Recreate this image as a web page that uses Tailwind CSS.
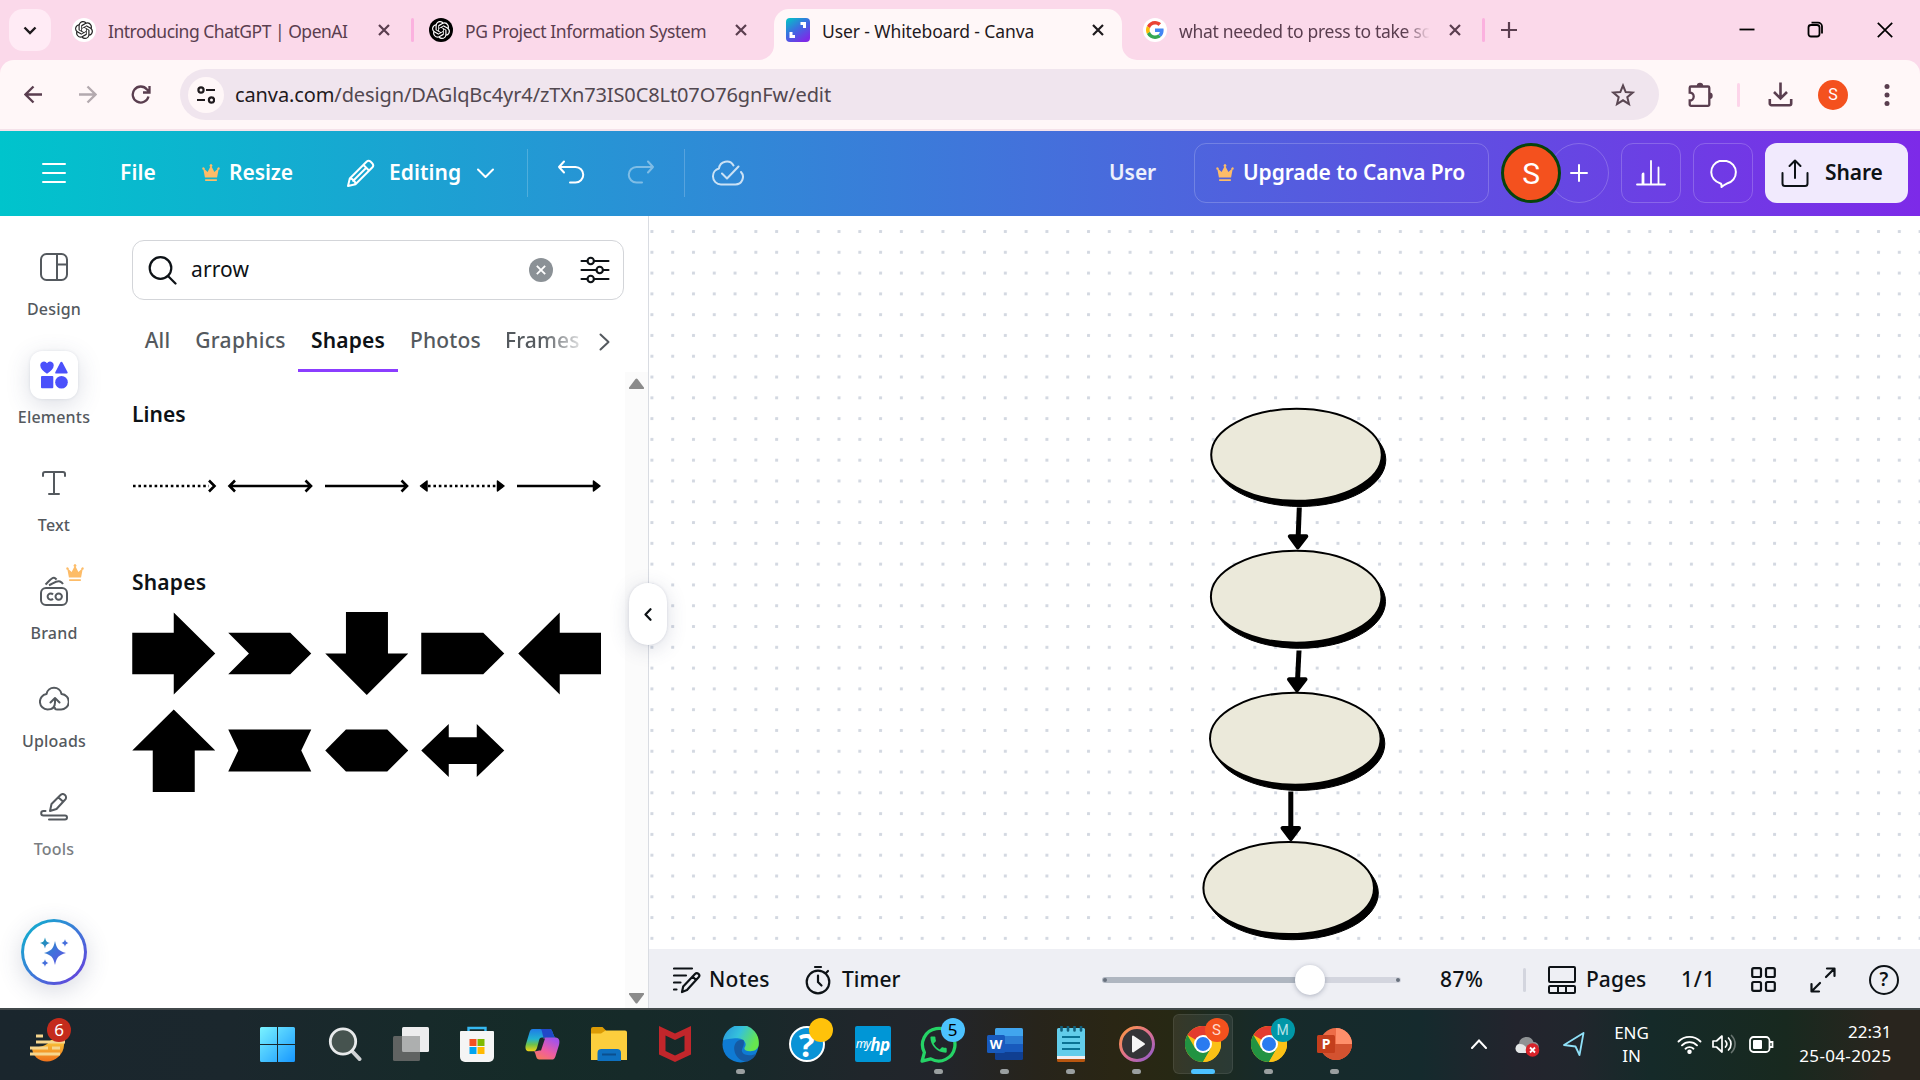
<!DOCTYPE html>
<html lang="en">
<head>
<meta charset="utf-8">
<title>User - Whiteboard - Canva</title>
<script src="https://cdn.jsdelivr.net/npm/@tailwindcss/browser@4"></script>
</head>
<body class="w-[1920px] h-[1080px] overflow-hidden bg-white font-['Noto_Sans',sans-serif] text-[#0d1216] flex flex-col">

<svg width="0" height="0" class="absolute">
  <defs>
    <symbol id="crown" viewBox="0 0 16 16"><path fill="#fdbc68" d="M2.6 12 1.3 5.2A1.1 1.1 0 1 1 2.3 4.6L5 7 7.4 2.4a1.2 1.2 0 1 1 1.2 0L11 7l2.700-2.400a1.100 1.100 0 1 1 1 .6L13.400 12zM2.800 13.600h10.400v1.500H2.800z"/></symbol>
    <symbol id="x" viewBox="0 0 12 12"><path d="M1 1l10 10M11 1 1 11" fill="none" stroke="currentColor" stroke-width="2.200"/></symbol>
    <symbol id="openai" viewBox="0 0 24 24"><path fill="currentColor" d="M22.2819 9.8211a5.9847 5.9847 0 0 0-.5157-4.9108 6.0462 6.0462 0 0 0-6.5098-2.9A6.0651 6.0651 0 0 0 4.9807 4.1818a5.9847 5.9847 0 0 0-3.9977 2.9 6.0462 6.0462 0 0 0 .7427 7.0966 5.98 5.98 0 0 0 .511 4.9107 6.051 6.051 0 0 0 6.5146 2.9001A5.9847 5.9847 0 0 0 13.2599 24a6.0557 6.0557 0 0 0 5.7718-4.2058 5.9894 5.9894 0 0 0 3.9977-2.9001 6.0557 6.0557 0 0 0-.7475-7.0729zm-9.022 12.6081a4.4755 4.4755 0 0 1-2.8764-1.0408l.1419-.0804 4.7783-2.7582a.7948.7948 0 0 0 .3927-.6813v-6.7369l2.02 1.1686a.071.071 0 0 1 .038.052v5.5826a4.504 4.504 0 0 1-4.4945 4.4944zm-9.6607-4.1254a4.4708 4.4708 0 0 1-.5346-3.0137l.142.0852 4.783 2.7582a.7712.7712 0 0 0 .7806 0l5.8428-3.3685v2.3324a.0804.0804 0 0 1-.0332.0615L9.74 19.9502a4.4992 4.4992 0 0 1-6.1408-1.6464zM2.3408 7.8956a4.485 4.485 0 0 1 2.3655-1.9728V11.6a.7664.7664 0 0 0 .3879.6765l5.8144 3.3543-2.0201 1.1685a.0757.0757 0 0 1-.071 0l-4.8303-2.7865A4.504 4.504 0 0 1 2.3408 7.872zm16.5963 3.8558L13.1038 8.364 15.1192 7.2a.0757.0757 0 0 1 .071 0l4.8303 2.7913a4.4944 4.4944 0 0 1-.6765 8.1042v-5.6772a.79.79 0 0 0-.407-.667zm2.0107-3.0231l-.142-.0852-4.7735-2.7818a.7759.7759 0 0 0-.7854 0L9.409 9.2297V6.8974a.0662.0662 0 0 1 .0284-.0615l4.8303-2.7866a4.4992 4.4992 0 0 1 6.6802 4.66zM8.3065 12.863l-2.02-1.1638a.0804.0804 0 0 1-.038-.0567V6.0742a4.4992 4.4992 0 0 1 7.3757-3.4537l-.142.0805L8.704 5.459a.7948.7948 0 0 0-.3927.6813zm1.0976-2.3654l2.602-1.4998 2.6069 1.4998v2.9994l-2.5974 1.4997-2.6067-1.4997Z"/></symbol>
    <symbol id="chrome" viewBox="0 0 36 36">
      <circle cx="18" cy="18" r="18" fill="#fbc116"/>
      <path d="M18 18 2.400 9A18 18 0 0 1 33.600 9z" fill="#e33b2e"/>
      <path d="M2.400 9A18 18 0 0 0 18 36l7.800-13.500L18 18 10.200 22.500z" fill="#229342"/>
      <path d="M18 9h15.600A18 18 0 0 1 18 36l7.800-13.500z" fill="#fbc116"/>
      <circle cx="18" cy="18" r="9" fill="#fff"/><circle cx="18" cy="18" r="7" fill="#2a7bf0"/>
    </symbol>
  </defs>
</svg>

<!-- Browser tab strip -->
<header class="h-[60px] shrink-0 bg-[#fbd9ea] flex items-start pt-[9px] pl-[9px] text-[17.5px] text-[#5a3e4f]">
  <div class="w-[42px] h-[42px] rounded-[14px] bg-[#ffebf5] flex items-center justify-center">
    <svg width="14" height="9" viewBox="0 0 14 9" fill="none" stroke="#1f1a1d" stroke-width="2.400"><path d="M1.500 1.500 7 7l5.500-5.500"/></svg>
  </div>
  <div class="ml-[21px] w-[339px] h-[42px] flex items-center">
    <div class="w-6 h-6 rounded-full bg-white flex items-center justify-center text-[#222]"><svg width="18" height="18"><use href="#openai"/></svg></div>
    <span class="ml-3 mt-[3px] w-[270px] whitespace-nowrap tracking-[-0.49px]">Introducing ChatGPT | OpenAI</span>
    <svg width="12" height="12"><use href="#x"/></svg>
  </div>
  <div class="w-[3px] h-6 mt-[9px] rounded bg-[#fbb1df]"></div>
  <div class="ml-[15px] w-[345px] h-[42px] flex items-center">
    <div class="w-6 h-6 rounded-full bg-black flex items-center justify-center text-white"><svg width="18" height="18"><use href="#openai"/></svg></div>
    <span class="ml-3 mt-[3px] w-[270px] whitespace-nowrap tracking-[-0.39px]">PG Project Information System</span>
    <svg width="12" height="12"><use href="#x"/></svg>
  </div>
  <div class="relative w-[348px] h-[51px] rounded-t-[15px] bg-[#fff7f8] text-[#1f1a1d]">
    <svg class="absolute -left-[15px] bottom-0" width="15" height="15" viewBox="0 0 15 15"><path fill="#fff7f8" d="M15 0v15H0A15 15 0 0 0 15 0z"/></svg>
    <svg class="absolute -right-[15px] bottom-0" width="15" height="15" viewBox="0 0 15 15"><path fill="#fff7f8" d="M0 0v15h15A15 15 0 0 1 0 0z"/></svg>
    <div class="h-[42px] pl-3 flex items-center">
      <svg width="24" height="24" viewBox="0 0 24 24"><defs><linearGradient id="wb" x1="0" y1="0" x2=".7" y2="1"><stop offset="0" stop-color="#00c9c4"/><stop offset=".5" stop-color="#3a6fe0"/><stop offset="1" stop-color="#7d2ae8"/></linearGradient></defs><rect width="24" height="24" rx="4" fill="url(#wb)"/><path d="M14.500 5.500H18.500V10M9 18.500H5V14" fill="none" stroke="#fff" stroke-width="3"/></svg>
      <span class="ml-3 mt-[3px] w-[270px] whitespace-nowrap tracking-[-0.1px]">User - Whiteboard - Canva</span>
      <svg width="12" height="12"><use href="#x"/></svg>
    </div>
  </div>
  <div class="ml-[21px] w-[339px] h-[42px] flex items-center">
    <div class="w-6 h-6 rounded-full bg-white flex items-center justify-center">
      <svg width="18" height="18" viewBox="0 0 48 48"><path fill="#EA4335" d="M24 9.500c3.540 0 6.710 1.220 9.210 3.600l6.850-6.850C35.900 2.380 30.470 0 24 0 14.620 0 6.510 5.380 2.560 13.220l7.980 6.190C12.430 13.720 17.740 9.500 24 9.500z"/><path fill="#4285F4" d="M46.980 24.550c0-1.570-.15-3.090-.38-4.550H24v9.020h12.940c-.58 2.960-2.260 5.480-4.780 7.180l7.730 6c4.510-4.180 7.090-10.360 7.090-17.650z"/><path fill="#FBBC05" d="M10.530 28.590c-.48-1.450-.76-2.990-.76-4.590s.27-3.140.76-4.590l-7.980-6.190C.92 16.460 0 20.120 0 24c0 3.880.92 7.540 2.560 10.780l7.970-6.190z"/><path fill="#34A853" d="M24 48c6.480 0 11.930-2.130 15.890-5.810l-7.730-6c-2.150 1.450-4.920 2.300-8.160 2.300-6.260 0-11.570-4.220-13.470-9.910l-7.980 6.190C6.510 42.620 14.620 48 24 48z"/></svg>
    </div>
    <span class="ml-3 mt-[3px] mr-[19px] w-[251px] overflow-hidden whitespace-nowrap tracking-[-0.31px] mask-r-from-90%">what needed to press to take sc</span>
    <svg width="12" height="12"><use href="#x"/></svg>
  </div>
  <div class="w-[3px] h-6 mt-[9px] rounded bg-[#fbb1df]"></div>
  <div class="ml-[16px] mt-[13px] w-[238px]"><svg width="16" height="16" viewBox="0 0 16 16" stroke="#5a3e4f" stroke-width="2.200"><path d="M8 0v16M0 8h16"/></svg></div>
  <div class="mt-[12px] flex items-center gap-[60px] text-black">
    <svg width="16" height="16" viewBox="0 0 16 16"><path d="M0.500 7.500h15" stroke="currentColor" stroke-width="1.800"/></svg>
    <svg class="-ml-[8px]" width="17" height="17" viewBox="0 0 17 17" fill="none" stroke="currentColor" stroke-width="1.800"><rect x="1.500" y="4" width="11" height="11.500" rx="2.500"/><path d="M4.500 1.600h6.500a4 4 0 0 1 4 4V12.500"/></svg>
    <svg class="-ml-[7px]" width="16" height="16" viewBox="0 0 16 16"><path d="M.8.800l14.400 14.400M15.200.800.800 15.200" stroke="currentColor" stroke-width="1.700"/></svg>
  </div>
</header>

<!-- Address bar -->
<div class="h-[71px] shrink-0 bg-[#fbd9ea]">
  <div class="h-[71px] rounded-t-[14px] bg-[#fff7f8] border-b-2 border-[#f5e2ea] flex items-center pl-6 text-[#5a3e4f]">
    <svg width="19" height="19" viewBox="0 0 19 19" fill="none" stroke="currentColor" stroke-width="2.300"><path d="M18 9.500H2M9.500 1.500l-8 8 8 8"/></svg>
    <svg class="ml-[35px] text-[#b3a9ae]" width="19" height="19" viewBox="0 0 19 19" fill="none" stroke="currentColor" stroke-width="2.300"><path d="M1 9.500h16M9.500 1.500l8 8-8 8"/></svg>
    <svg class="ml-[34px]" width="20" height="20" viewBox="0 0 20 20" fill="none" stroke="currentColor" stroke-width="2.300"><path d="M17.500 11.500A8 8 0 1 1 16 4.500l2 2M18.500 1v6.500H12"/></svg>
    <div class="ml-[29px] w-[1479px] h-[51px] rounded-full bg-[#f0e5ee] flex items-center pl-2">
      <div class="w-9 h-9 rounded-full bg-[#fff7f8] flex items-center justify-center"><svg width="18" height="18" viewBox="0 0 18 18" fill="none" stroke="#1f1a1d" stroke-width="2.200"><circle cx="4" cy="4" r="2.600"/><path d="M9 4h9M0 14h8"/><circle cx="14.500" cy="14" r="2.600"/></svg></div>
      <span class="ml-[11px] w-[1376px] text-[20px] whitespace-nowrap tracking-[-0.11px]"><span class="text-[#1f1a1d]">canva.com</span><span class="text-[#524850]">/design/DAGlqBc4yr4/zTXn73IS0C8Lt07O76gnFw/edit</span></span>
      <svg class="shrink-0" width="24" height="24" viewBox="0 0 24 24" fill="none" stroke="#5a4652" stroke-width="2"><path d="M12 2.500l2.700 6.600 7 .5-5.400 4.600 1.700 6.900-6-3.800-6 3.800 1.700-6.900L2.300 9.600l7-.5z"/></svg>
    </div>
    <svg class="ml-[28px]" width="26" height="26" viewBox="0 0 26 26"><path d="M4.500 4.500H21a1.300 1.300 0 0 1 1.300 1.300V22.500A1.300 1.300 0 0 1 21 23.800H4a1.300 1.300 0 0 1-1.300-1.300V18.500a4 4 0 0 0 0-8V5.800a1.300 1.300 0 0 1 1.300-1.300z" fill="none" stroke="currentColor" stroke-width="2.300"/><path d="M9.800 4a3.200 3.200 0 0 1 6.400 0zM22.500 10.500a3.200 3.200 0 0 1 0 6.400z" fill="currentColor"/></svg>
    <div class="ml-[24px] w-[3px] h-6 rounded bg-[#fdd5ea]"></div>
    <svg class="ml-[28px]" width="25" height="25" viewBox="0 0 25 25" fill="none" stroke="currentColor" stroke-width="2.600"><path d="M12.500.500V16M6 10l6.500 6.500L19 10M1.800 17v4.500a1.700 1.700 0 0 0 1.700 1.700h18a1.700 1.700 0 0 0 1.700-1.700V17"/></svg>
    <div class="ml-[25px] w-[30px] h-[30px] rounded-full bg-[#f4511e] text-white font-['Roboto'] text-[16px] flex items-center justify-center">S</div>
    <svg class="ml-[36px]" width="6" height="22" viewBox="0 0 6 22" fill="currentColor"><circle cx="3" cy="2.500" r="2.500"/><circle cx="3" cy="11" r="2.500"/><circle cx="3" cy="19.500" r="2.500"/></svg>
  </div>
</div>

<!-- Editor menu bar -->
<nav class="h-[85px] pb-px shrink-0 bg-[linear-gradient(90deg,#00c4cc,#7d2ae8)] flex items-center text-white text-[21px] font-semibold whitespace-nowrap tracking-[-0.08px]">
  <svg class="ml-[42px]" width="24" height="26" viewBox="0 0 24 26" stroke="#fff" stroke-width="2" stroke-linecap="round"><path d="M1 4h22M1 13h22M1 22h22"/></svg>
  <span class="ml-[54px] w-[82px] tracking-[0.1px]">File</span>
  <svg width="18" height="18"><use href="#crown"/></svg>
  <span class="ml-[9px] w-[117px]">Resize</span>
  <svg width="29" height="29" viewBox="0 0 29 29" fill="none" stroke="#fff" stroke-width="2" stroke-linejoin="round"><path d="M2 27l1.800-7.500L20.500 2.800a3 3 0 0 1 4.200 0l1.500 1.500a3 3 0 0 1 0 4.200L9.500 25.200zM17.500 6l5.700 5.700M3.800 19.500c3 .2 5.500 2.700 5.700 5.700M6.500 22.500 20 9"/></svg>
  <span class="ml-[14px] w-[88px] tracking-[0.05px]">Editing</span>
  <svg width="17" height="11" viewBox="0 0 17 11" fill="none" stroke="#fff" stroke-width="2" stroke-linecap="round" stroke-linejoin="round"><path d="M1 1.500l7.500 7.500L16 1.500"/></svg>
  <div class="ml-[33px] w-px h-12 bg-white/20"></div>
  <svg class="ml-[29px]" width="28" height="26" viewBox="0 0 28 26" fill="none" stroke="#fff" stroke-width="2" stroke-linecap="round" stroke-linejoin="round"><path d="M7 1.500 2 7l5 5.500M2 7h16.500a7.500 7.500 0 0 1 0 15.500H13"/></svg>
  <svg class="ml-[42px] opacity-40" width="28" height="26" viewBox="0 0 28 26" fill="none" stroke="#fff" stroke-width="2" stroke-linecap="round" stroke-linejoin="round"><path d="M21 1.500 26 7l-5 5.500M26 7H9.500a7.500 7.500 0 0 0 0 15.500H15"/></svg>
  <div class="ml-[29px] w-px h-12 bg-white/20"></div>
  <svg class="ml-[26px] opacity-75" width="34" height="28" viewBox="0 0 34 28" fill="none" stroke="#fff" stroke-width="2" stroke-linecap="round" stroke-linejoin="round"><path d="M22.500 6.500A7.800 7.800 0 0 0 8 9.500a8 8 0 0 0-6 8 8 8 0 0 0 8 8h14.500a7.500 7.500 0 0 0 5.500-12.500M11 14.500l5 5L27.500 7.500"/></svg>
  <span class="ml-[364px] w-[85px] text-white/90">User</span>
  <div class="w-[295px] h-[60px] rounded-xl border border-white/20 flex items-center pl-[21px]">
    <svg width="18" height="18"><use href="#crown"/></svg><span class="ml-[9px]">Upgrade to Canva Pro</span>
  </div>
  <div class="ml-[12px] w-[60px] h-[60px] shrink-0 z-10 rounded-full bg-[#f4511e] border-[3px] border-[#07430c] flex items-center justify-center font-['Roboto'] text-[30px] font-normal">S</div>
  <div class="-ml-[12px] w-[60px] h-[60px] shrink-0 rounded-full border border-white/20 flex items-center justify-center"><svg width="18" height="18" viewBox="0 0 18 18" stroke="#fff" stroke-width="2" stroke-linecap="round"><path d="M9 1v16M1 9h16"/></svg></div>
  <div class="ml-[12px] w-[60px] h-[60px] shrink-0 rounded-xl border border-white/20 flex items-center justify-center"><svg width="30" height="28" viewBox="0 0 30 28" fill="none" stroke="#fff" stroke-width="1.800" stroke-linecap="round"><path d="M1 25.500h28M6.500 25V15.500a1 1 0 0 1 1-1M7.500 25V15M15 25V2M22.500 25V8.500"/></svg></div>
  <div class="ml-[12px] w-[60px] h-[60px] shrink-0 rounded-xl border border-white/20 flex items-center justify-center"><svg width="32" height="32" viewBox="0 0 32 32" fill="none" stroke="#fff" stroke-width="2" stroke-linejoin="round"><path d="M13 26.200A11.500 11.500 0 0 1 12.500 4h7a11.500 11.500 0 0 1 .5 22.500c-1.500.7-3.300 1.500-5.500 3.500.3-2-.2-3.500-1.500-3.800z"/></svg></div>
  <div class="ml-[12px] w-[143px] h-[60px] shrink-0 rounded-xl bg-[#f1eafd] text-[#0d1216] flex items-center pl-4"><svg width="28" height="30" viewBox="0 0 28 30" fill="none" stroke="currentColor" stroke-width="2" stroke-linecap="round" stroke-linejoin="round"><path d="M14 20V2.500M8.500 8 14 2.500 19.500 8M1.500 15v10.500a2.500 2.500 0 0 0 2.500 2.500h20a2.500 2.500 0 0 0 2.500-2.500V15"/></svg><span class="ml-4">Share</span></div>
</nav>

<main class="h-[792px] shrink-0 flex">
  <!-- Side rail -->
  <aside class="w-[108px] flex flex-col items-center text-[16px] font-medium tracking-[0.2px] text-[#54595e]">
    <div class="h-[108px] mt-[18px] flex flex-col items-center pt-[9px]">
      <div class="w-12 h-12 flex items-center justify-center"><svg width="28" height="28" viewBox="0 0 28 28" fill="none" stroke="currentColor" stroke-width="2"><rect x="1" y="1" width="26" height="26" rx="5.500"/><path d="M17 1v26M17 11.500h10"/></svg></div><span class="mt-[6px]">Design</span></div>
    <div class="h-[108px] flex flex-col items-center pt-[9px]">
      <div class="w-12 h-12 rounded-xl bg-white shadow-[0_6px_24px_rgba(60,70,110,0.18),0_0_3px_rgba(60,70,110,0.12)] flex items-center justify-center"><svg width="28" height="28" viewBox="0 0 28 28" fill="#4b50fb"><path d="M7 12.800C3 10 .3 7.500.3 4.500A3.600 3.600 0 0 1 7 2.300a3.600 3.600 0 0 1 6.700 2.200c0 3-2.700 5.500-6.700 8.300zM20.300 1.500c.5-1 1.700-1 2.200 0l5 9.500c.4.800 0 1.600-1 1.600H16.400c-1 0-1.500-.8-1-1.600z"/><rect x="1" y="15" width="12.300" height="12.300" rx="1"/><circle cx="21.500" cy="21.200" r="6.300"/></svg></div><span class="mt-[6px]">Elements</span></div>
    <div class="h-[108px] flex flex-col items-center pt-[9px]">
      <div class="w-12 h-12 flex items-center justify-center"><svg width="26" height="26" viewBox="0 0 26 26" fill="none" stroke="currentColor" stroke-width="2" stroke-linecap="round"><path d="M2 6V4a2 2 0 0 1 2-2h18a2 2 0 0 1 2 2v2M13 2v22M8 24h10"/></svg></div><span class="mt-[6px]">Text</span></div>
    <div class="h-[108px] flex flex-col items-center pt-[9px]">
      <div class="relative w-12 h-12 flex items-center justify-center"><svg width="30" height="32" viewBox="0 0 30 32" fill="none" stroke="currentColor" stroke-width="2"><rect x="2" y="13" width="26" height="17" rx="5"/><path d="M6.500 9.500C11 5 13 2.500 15 2.800c1.500.2 2 1 2.500 1.800M10 10.200c4-1.500 7.500-5 11-3.700 2 .8 2.500 1.700 3 2.500"/><path d="M14 19.500a3.100 3.100 0 1 0 0 4.200" /><circle cx="19.700" cy="21.600" r="3.200"/></svg>
        <svg class="absolute left-[36px] -top-[3px]" width="18" height="18"><use href="#crown"/></svg></div><span class="mt-[6px]">Brand</span></div>
    <div class="h-[108px] flex flex-col items-center pt-[9px]">
      <div class="w-12 h-12 flex items-center justify-center"><svg class="-mt-[3px]" width="30" height="28" viewBox="0 0 30 28" fill="none" stroke="currentColor" stroke-width="2" stroke-linecap="round" stroke-linejoin="round"><path d="M16 24c0 1 1 1.500 2 1.500h3.500A7.700 7.700 0 0 0 22.500 10 7.600 7.600 0 0 0 7.500 10 7.800 7.800 0 0 0 8.500 25.500c4 0 7.500-2 7.500-7V14M11.500 18.500 16 14l4.500 4.500"/></svg></div><span class="mt-[6px]">Uploads</span></div>
    <div class="h-[108px] flex flex-col items-center pt-[9px]">
      <div class="w-12 h-12 flex items-center justify-center"><svg width="28" height="28" viewBox="0 0 28 28" fill="none" stroke="currentColor" stroke-width="2" stroke-linecap="round" stroke-linejoin="round"><path d="M10 18l1.500-7L20.500 2a3 3 0 0 1 4.500 0 3.200 3.200 0 0 1 0 4.800L16.500 16zM18.500 4.500l4.500 4M5.500 18H3.500a2.300 2.300 0 0 0 0 4.600H25a2 2 0 0 1 0 4H9"/></svg></div><span class="mt-[6px] text-[#7a7e82]">Tools</span></div>
    <div class="mt-[37px] w-[66px] h-[66px] rounded-full p-[3px] bg-[linear-gradient(135deg,#08b8cc,#3d7bd8_50%,#6c35dd)] shadow-[0_6px_24px_rgba(60,70,110,0.2)]">
      <div class="w-full h-full rounded-full bg-white flex items-center justify-center"><svg width="32" height="32" viewBox="0 0 32 32"><defs><linearGradient id="ai" x1="0" y1="0" x2="1" y2="1"><stop offset="0" stop-color="#149cb0"/><stop offset=".5" stop-color="#4270dc"/><stop offset="1" stop-color="#6a4be0"/></linearGradient></defs><path fill="url(#ai)" d="M17 5c1.800 8 3.500 9.800 11 12-7.500 2.200-9.200 4-11 12-1.800-8-3.500-9.800-11-12 7.500-2.200 9.200-4 11-12zM7 1.500C8 5.500 8.600 6 12.300 7 8.600 8 8 8.500 7 12.500 6 8.500 5.400 8 1.700 7 5.400 6 6 5.500 7 1.500zM27 3c.6 2.600 1 3 3.600 4-2.600 1-3 1.400-3.600 4-.6-2.600-1-3-3.600-4 2.600-1 3-1.400 3.600-4zM7 23c.6 2.600 1 3 3.600 4-2.600 1-3 1.400-3.600 4-.6-2.600-1-3-3.600-4 2.600-1 3-1.400 3.600-4z"/></svg></div>
    </div>
  </aside>

  <!-- Elements panel -->
  <section class="relative w-[541px] border-r border-[#d9dce2] flex flex-col">
    <div class="ml-6 mt-6 w-[492px] h-[60px] rounded-xl border border-[#d3d5d9] flex items-center pl-[15px] shrink-0">
      <svg width="30" height="30" viewBox="0 0 30 30" fill="none" stroke="currentColor" stroke-width="2.200" stroke-linecap="round"><circle cx="12.500" cy="13" r="10.800"/><path d="M20 21l7.500 7.500"/></svg>
      <span class="ml-[13px] w-[338px] text-[21px] tracking-[0.1px]">arrow</span>
      <div class="w-6 h-6 rounded-full bg-[#8b9196] flex items-center justify-center text-white"><svg width="10" height="10"><use href="#x"/></svg></div>
      <svg class="ml-[27px]" width="30" height="30" viewBox="0 0 30 30" fill="none" stroke="currentColor" stroke-width="2.100" stroke-linecap="round"><path d="M1.500 6h6M14 6h14.500M1.500 15h15M23 15h5.500M1.500 24h6M14 24h14.500"/><circle cx="10.700" cy="6" r="3.200"/><circle cx="19.700" cy="15" r="3.200"/><circle cx="10.700" cy="24" r="3.200"/></svg>
    </div>
    <div class="h-[72px] pl-[24px] flex text-[21px] font-medium text-[#54595e] shrink-0 whitespace-nowrap tracking-[0.15px]">
      <div class="w-[51px] flex items-center justify-center pt-[10px]">All</div>
      <div class="w-[115px] flex items-center justify-center pt-[10px] tracking-[0.3px]">Graphics</div>
      <div class="w-[100px] flex items-center justify-center border-b-3 border-[#8b3dff] text-[#0d1216] font-semibold pt-[13px]">Shapes</div>
      <div class="w-[95px] flex items-center justify-center pt-[10px]">Photos</div>
      <div class="w-[96px] flex items-center pl-3 pt-[10px] mask-r-from-50%">Frames</div>
      <div class="w-8 flex items-center justify-center pt-[12px]"><svg class="mr-px" width="11" height="18" viewBox="0 0 11 18" fill="none" stroke="currentColor" stroke-width="2" stroke-linecap="round" stroke-linejoin="round"><path d="M1.500 1.500 9.500 9l-8 7.500"/></svg></div>
    </div>
    <div class="flex-1 flex">
      <div class="w-[517px] pl-6">
        <h2 class="mt-[28px] h-[28px] leading-[28px] text-[21px] font-semibold tracking-[0.05px]">Lines</h2>
        <svg class="mt-[44px]" width="470" height="28" viewBox="132 472 470 28" fill="none" stroke="#000" stroke-width="2.600">
          <path stroke-dasharray="2.600 2.800" d="M133 486h76"/><path d="M209 480.500l5.500 5.500-5.500 5.500"/>
          <path d="M230 486h80M235 480.500l-5.500 5.500 5.500 5.500M305.500 480.500l5.500 5.500-5.500 5.500"/>
          <path d="M325 486h81M401.500 480.500l5.500 5.500-5.500 5.500"/>
          <path stroke-dasharray="2.600 2.800" d="M428 486h70"/><path fill="#000" stroke-width="1.500" stroke-linejoin="round" d="M427 481v10l-6.500-5zM497.500 481v10l6.500-5z"/>
          <path d="M517 486h78"/><path fill="#000" stroke-width="1.500" stroke-linejoin="round" d="M593.500 481v10l6.500-5z"/>
        </svg>
        <h2 class="mt-[68px] h-[28px] leading-[28px] text-[21px] font-semibold tracking-[0.2px]">Shapes</h2>
        <div class="mt-[16px] w-[469px] grid grid-cols-5 gap-x-[13px] gap-y-[14px]">
          <svg width="83.500" height="83" viewBox="0 0 83 83"><path d="M0 20.700h41.500V.500L83 41.500l-41.500 41V62.200H0z"/></svg>
          <svg width="83.500" height="83" viewBox="0 0 83 83"><path d="M0 20.700h62L83 41.500 62 62.200H0l20.700-20.700z"/></svg>
          <svg width="83.500" height="83" viewBox="0 0 83 83"><path d="M20.700 0h42v41.500H83L41.500 83 0 41.500h20.700z"/></svg>
          <svg width="83.500" height="83" viewBox="0 0 83 83"><path d="M0 20.700h62L83 41.500 62 62.200H0z"/></svg>
          <svg width="83.500" height="83" viewBox="0 0 83 83"><path d="M83 20.700H41.500V.500L0 41.500l41.500 41V62.200H83z"/></svg>
          <svg width="83.500" height="83" viewBox="0 0 83 83"><path d="M41.500.500 83 41.500H62.500V83h-42V41.500H0z"/></svg>
          <svg width="83.500" height="83" viewBox="0 0 83 83"><path d="M0 20.500h83l-10 21 10 21H0l10-21z"/></svg>
          <svg width="83.500" height="83" viewBox="0 0 83 83"><path d="M20.700 20.500H62l21 21-21 21H20.700L0 41.500z"/></svg>
          <svg width="83.500" height="83" viewBox="0 0 83 83"><path d="M27.500 15v13.300H55.500V15L83 41.500 55.500 68V55H27.500V68L0 41.500z"/></svg>
        </div>
      </div>
      <div class="flex-1 bg-[#fbfbfb] flex flex-col items-center justify-between pt-[6px] pb-[4px]">
        <svg width="15" height="11" viewBox="0 0 15 11"><path fill="#8b8b8b" d="M6.500 1a1.300 1.300 0 0 1 2 0L14.500 9a1 1 0 0 1-1 2h-12a1 1 0 0 1-1-2z"/></svg>
        <svg width="15" height="11" viewBox="0 0 15 11"><path fill="#8b8b8b" d="M6.500 10a1.300 1.300 0 0 0 2 0L14.500 2a1 1 0 0 0-1-2h-12a1 1 0 0 0-1 2z"/></svg>
      </div>
    </div>
    <div class="absolute z-10 left-[521px] top-[367px] w-[38px] h-[62px] rounded-full bg-white shadow-[0_4px_20px_rgba(60,70,110,0.18),0_0_3px_rgba(60,70,110,0.15)] flex items-center justify-center"><svg width="8" height="13" viewBox="0 0 8 13" fill="none" stroke="#0d1216" stroke-width="2.200" stroke-linecap="round" stroke-linejoin="round"><path d="M6.500 1.200 1.500 6.500l5 5.300"/></svg></div>
  </section>

  <!-- Whiteboard -->
  <section class="w-[1271px] flex flex-col">
    <svg width="1271" height="733" viewBox="649 216 1271 733">
      <defs><pattern id="dots" patternUnits="userSpaceOnUse" x="650.400" y="230" width="20.790" height="20.790"><rect width="3" height="3" rx=".6" fill="#d3d8e1"/></pattern></defs>
      <rect x="649" y="216" width="1271" height="733" fill="url(#dots)"/>
      <g stroke="#000">
        <ellipse cx="1300" cy="459.800" rx="85.800" ry="46.700"/><ellipse cx="1296.500" cy="454.800" rx="85.300" ry="46" fill="#ebe9da" stroke-width="2"/>
        <ellipse cx="1299.700" cy="601.600" rx="85.800" ry="46.700"/><ellipse cx="1296.200" cy="596.700" rx="85.300" ry="46" fill="#ebe9da" stroke-width="2"/>
        <ellipse cx="1299" cy="743.700" rx="85.800" ry="46.700"/><ellipse cx="1295.300" cy="738.700" rx="85.300" ry="46" fill="#ebe9da" stroke-width="2"/>
        <ellipse cx="1292.500" cy="893" rx="85.800" ry="46.700"/><ellipse cx="1288.700" cy="888" rx="85.300" ry="46" fill="#ebe9da" stroke-width="2"/>
      </g>
      <g stroke="#000" stroke-width="5" stroke-linejoin="round">
        <path d="M1299.300 507.500 1298.200 536"/><path stroke-width="4" d="M1289.800 536.300h16.500l-8.500 11z"/>
        <path d="M1299 650.500 1297.600 679"/><path stroke-width="4" d="M1289 679.300h16.500l-8.500 11z"/>
        <path d="M1290.800 791.500V828"/><path stroke-width="4" d="M1282.500 828h16.500l-8.200 11z"/>
      </g>
    </svg>
    <footer class="h-[59px] bg-[#eeeff4] flex items-center pb-px pt-[3px] text-[21px] font-medium whitespace-nowrap tracking-[0.05px]">
      <svg class="ml-6" width="28" height="28" viewBox="0 0 28 28" fill="none" stroke="currentColor" stroke-width="2.200" stroke-linecap="round" stroke-linejoin="round"><path d="M1 2.500h18M1 9.500h12M1 16.500h6.500M1 23.500h2.500M9 26l1.200-5.500L22 8a2.400 2.400 0 0 1 3.600 3.300L14 24zM19.500 10.500l3.500 3.500"/></svg>
      <span class="ml-[8px] w-[96px] tracking-[0.25px]">Notes</span>
      <svg width="26" height="30" viewBox="0 0 26 30" fill="none" stroke="currentColor" stroke-width="2.200" stroke-linecap="round"><circle cx="13" cy="17" r="11.300"/><path d="M10 2h6M13 10.500V17l3.500 3.500M21 8l2-2"/></svg>
      <span class="ml-[11px] w-[260px]">Timer</span>
      <div class="relative w-[299px] h-[30px] flex items-center">
        <div class="w-[209px] h-[6px] rounded-l-full bg-[#afb6c0] flex items-center pl-px"><div class="w-1 h-1 rounded-full bg-[#67707c]"></div></div>
        <div class="w-[90px] h-[6px] rounded-r-full bg-[#d3d5de] flex items-center justify-end pr-px"><div class="w-1 h-1 rounded-full bg-[#67707c]"></div></div>
        <div class="absolute left-[193px] top-0 w-[30px] h-[30px] rounded-full bg-white shadow-[0_1px_5px_rgba(50,60,90,0.35)]"></div>
      </div>
      <span class="ml-[39px] w-[83px] tracking-[0.5px]">87%</span>
      <div class="w-[3px] h-6 rounded bg-[#d3d5de]"></div>
      <svg class="ml-[22px]" width="28" height="28" viewBox="0 0 28 28" fill="none" stroke="currentColor" stroke-width="2"><rect x="1" y="1" width="26" height="15" rx="1"/><rect x="1" y="20" width="26" height="7" rx="1"/><path d="M10 20v7M18 20v7"/></svg>
      <span class="ml-[10px] w-[95px]">Pages</span><span class="w-[70px] tracking-[0.8px]">1/1</span>
      <svg width="25" height="25" viewBox="0 0 25 25" fill="none" stroke="currentColor" stroke-width="2.200"><rect x="1.200" y="1.200" width="8.800" height="8.800" rx="1.500"/><rect x="15" y="1.200" width="8.800" height="8.800" rx="1.500"/><rect x="1.200" y="15" width="8.800" height="8.800" rx="1.500"/><rect x="15" y="15" width="8.800" height="8.800" rx="1.500"/></svg>
      <svg class="ml-[34px]" width="26" height="26" viewBox="0 0 26 26" fill="none" stroke="currentColor" stroke-width="2.200" stroke-linecap="round" stroke-linejoin="round"><path d="M17 1.500h7.500V9M24 2l-8 8M9 24.500H1.500V17M2 24l8-8"/></svg>
      <div class="ml-[33px] w-[30px] h-[30px] rounded-full border-2 border-[#0d1216] flex items-center justify-center text-[19px] font-semibold">?</div>
    </footer>
  </section>
</main>

<!-- Taskbar -->
<div class="h-[72px] pb-[2px] shrink-0 border-t-2 border-[#42494b] bg-[linear-gradient(90deg,#1a262d_0%,#1b272d_12%,#172a2a_22%,#152b28_28%,#17292a_38%,#20262b_45%,#22252b_49%,#27241b_54%,#2a2614_58%,#272814_61%,#1c2a20_63%,#172a2a_66%,#152a2d_74%,#23242d_79%,#21262d_82%,#152a29_86%,#18291f_93%,#29251e_98%)] flex items-center text-white">
  <div class="relative ml-[29px] w-[38px] h-[38px]"><svg width="38" height="38" viewBox="0 0 38 38"><defs><linearGradient id="sun" x1="0" y1="0" x2="0" y2="1"><stop offset="0" stop-color="#f8c93a"/><stop offset="1" stop-color="#f0721a"/></linearGradient></defs><path d="M3 22c0 9 7 14.500 15 14.500S35 29 35 20l1-5H22c-4 6-12 8-19 7z" fill="url(#sun)"/><path d="M7 11h7M7 17h29M1 23h18M23 23h8M1 29h30" stroke="#f6d68e" stroke-width="2.800"/></svg>
    <div class="absolute left-[18px] -top-[7px] w-6 h-6 rounded-full bg-[#c42b1c] text-[17px] flex items-center justify-center">6</div></div>
  <div class="ml-[177px] flex">
    <div class="w-[67.500px] h-[66px] flex items-center pl-[15.500px]"><svg width="35" height="35" viewBox="0 0 35 35"><defs><linearGradient id="win" x1="0" y1="0" x2="1" y2="1"><stop offset="0" stop-color="#7af3ff"/><stop offset="1" stop-color="#1797ff"/></linearGradient></defs><path fill="url(#win)" d="M1.500 0H17v17H0V1.500A1.500 1.500 0 0 1 1.500 0zM18 0h15.500A1.500 1.500 0 0 1 35 1.500V17H18zM0 18h17v17H1.500A1.500 1.500 0 0 1 0 33.500zM18 18h17v15.500a1.500 1.500 0 0 1-1.500 1.500H18z"/></svg></div>
    <div class="w-[66px] h-[66px] flex items-center justify-center"><svg width="34" height="34" viewBox="0 0 34 34"><path d="M23 23l8.500 9" stroke="#cfd2d4" stroke-width="4" stroke-linecap="round"/><circle cx="15" cy="14.500" r="12.700" fill="#46534f" stroke="#e8eaeb" stroke-width="2.800"/></svg></div>
    <div class="w-[66px] h-[66px] flex items-center justify-center"><svg width="36" height="34" viewBox="0 0 36 34"><rect x="9" y="0" width="27" height="25" rx="1.500" fill="#ededee"/><rect x="0" y="9" width="27" height="25" rx="1.500" fill="#606362"/><path d="M9 9h18v16H10.500A1.500 1.500 0 0 1 9 23.500z" fill="#adafaf"/></svg></div>
    <div class="w-[66px] h-[66px] flex items-center justify-center"><svg width="36" height="36" viewBox="0 0 36 36"><path d="M9.500 7V2h17v5" fill="none" stroke="#35b9f1" stroke-width="2.400"/><path d="M2 5h32a1 1 0 0 1 1 1v25a5 5 0 0 1-5 5H6a5 5 0 0 1-5-5V6a1 1 0 0 1 1-1z" fill="#f5f5f5"/><path fill="#f25022" d="M10.500 13H17.500V20h-7z"/><path fill="#7fba00" d="M18.500 13H25.500V20h-7z"/><path fill="#00a4ef" d="M10.500 21H17.500V28h-7z"/><path fill="#ffb900" d="M18.500 21H25.500V28h-7z"/></svg></div>
    <div class="w-[66px] h-[66px] flex items-center justify-center"><svg width="35" height="32" viewBox="0 0 35 32"><defs><linearGradient id="cp1" x1="0" y1="0" x2="0" y2="1"><stop offset="0" stop-color="#1f7be8"/><stop offset=".45" stop-color="#22b3d0"/><stop offset=".7" stop-color="#6fc24a"/><stop offset="1" stop-color="#f3d313"/></linearGradient><linearGradient id="cp2" x1=".6" y1="0" x2="0" y2="1"><stop offset="0" stop-color="#a653e8"/><stop offset=".5" stop-color="#ee5da0"/><stop offset="1" stop-color="#f9804c"/></linearGradient></defs><path d="M8 1h17c3 0 3 8.500 6 8.500h-9l-5 0c-2 0-2.500 1-3 3L12 20c-.7 2-1.500 3.300-4 3.300H4.500C0 23.300 0 19.500 1 16L4 6c1-3.500 1.500-5 4-5z" fill="url(#cp1)"/><path d="M15 1h10c3 0 3 8.500 6 8.500h-9.500c-2.500 0-3 1-3.500-1.500C17 4 17 1 15 1z" fill="#2148c8"/><path d="M27 31.500H14c-4 0-2.500-8.200-6-8.200 3.500 0 6 .2 7-3.300l2-7.200c.8-2.500 2-3.300 4-3.300h9.500c4 0 4.500 4 3.500 7.500L31 26.500c-1 3.500-1.500 5-4 5z" fill="url(#cp2)"/><path d="M17 10.500h3l-4 12h-4z" fill="#182a28"/></svg></div>
    <div class="w-[66px] h-[66px] flex items-center justify-center"><svg width="36" height="34" viewBox="0 0 36 34"><path d="M0 2a2 2 0 0 1 2-2h9.500L15 3.500 12 8H0z" fill="#dc9b05"/><path d="M0 6.500h10L14.500 3.500H34a2 2 0 0 1 2 2V33H0z" fill="#fcce3d"/><path d="M6.500 34V26a4 4 0 0 1 4-4H26a4 4 0 0 1 4 4v8z" fill="#0e70c0"/><path d="M11 27.500h14" stroke="#0b4f8e" stroke-width="2"/></svg></div>
    <div class="w-[66px] h-[66px] flex items-center justify-center"><svg width="32" height="36" viewBox="0 0 32 36"><path d="M0 0l16 7.500L32 0v28.500L16 36 0 28.500zM6.500 9.500v15.500L16 29.500 25.500 25V9.500L16 14z" fill="#c2262b"/></svg></div>
    <div class="relative w-[66px] h-[66px] flex items-center justify-center"><svg width="37" height="37" viewBox="0 0 36 36"><defs><linearGradient id="ed" x1="0" y1="0" x2="1" y2=".4"><stop offset="0" stop-color="#2793dc"/><stop offset=".5" stop-color="#35c1dc"/><stop offset="1" stop-color="#66e64e"/></linearGradient></defs><circle cx="18" cy="18" r="17.500" fill="#0f7bd4"/><path d="M1 14A17.500 17.500 0 0 1 35.800 17.500c0 4.500-3.500 7-8.300 7-4.500 0-6.500-1.800-5.500-3.500 3-4-1-9-7-9-6.500 0-12 1-14 2z" fill="url(#ed)"/><path d="M21 13.500c-6-1-10 4-9 10 1 7.500 8 11.500 13 11 4-1.500 7-4.500 8.500-7.500-4 2-12 2.500-14-2-1-3.500 3-5 1.500-11.500z" fill="#155aa3"/></svg><i class="absolute bottom-[3px] w-[9px] h-[5px] rounded-full bg-[#9a9fa0]"></i></div>
    <div class="relative w-[66px] h-[66px] flex items-center justify-center"><div class="w-9 h-9 rounded-full bg-[#0a93d6] border-2 border-white flex items-center justify-center text-[33px] font-bold leading-none">?</div><i class="absolute left-[35px] top-[7px] w-6 h-6 rounded-full bg-[#ffc20a]"></i></div>
    <div class="w-[66px] h-[66px] flex items-center justify-center"><div class="w-9 h-9 rounded-[2px] bg-[#0096d6] flex items-center justify-center italic text-[12px] leading-none tracking-[-0.7px]">my<span class="text-[17px] font-bold">hp</span></div></div>
    <div class="relative w-[66px] h-[66px] flex items-center justify-center"><svg width="37" height="37" viewBox="0 0 36 36"><path d="M2 34.200l2.300-8.500A15.800 15.800 0 1 1 10.500 32z" fill="none" stroke="#25d366" stroke-width="3.200" stroke-linejoin="round"/><path transform="translate(7.500 7.500) scale(.88)" fill="#25d366" d="M6.620 10.790c1.440 2.830 3.760 5.140 6.590 6.590l2.200-2.200c.27-.27.67-.36 1.020-.24 1.120.37 2.330.57 3.570.57.55 0 1 .45 1 1V20c0 .55-.45 1-1 1-9.390 0-17-7.610-17-17 0-.55.45-1 1-1h3.500c.55 0 1 .45 1 1 0 1.250.2 2.450.57 3.570.11.35.03.74-.25 1.020l-2.200 2.200z"/></svg><b class="absolute left-[35px] top-[7px] w-6 h-6 rounded-full bg-[#4cc2ff] text-black font-normal text-[17px] flex items-center justify-center">5</b><i class="absolute bottom-[3px] w-[9px] h-[5px] rounded-full bg-[#9a9fa0]"></i></div>
    <div class="relative w-[66px] h-[66px] flex items-center justify-center"><svg width="36" height="32" viewBox="0 0 36 32"><path fill="#41a5ee" d="M8 1.500A1.500 1.500 0 0 1 9.500 0h25A1.500 1.500 0 0 1 36 1.500V8H8z"/><path fill="#2b7cd3" d="M8 8h28v8H8z"/><path fill="#185abd" d="M8 16h28v8H8z"/><path fill="#103f91" d="M8 24h28v6.500a1.500 1.500 0 0 1-1.500 1.500h-25A1.500 1.500 0 0 1 8 30.500z"/><rect y="7" width="18" height="18" rx="1.500" fill="#185abd"/><text x="9" y="20.500" text-anchor="middle" font-size="13" font-weight="700" fill="#fff">W</text></svg><i class="absolute bottom-[3px] w-[9px] h-[5px] rounded-full bg-[#9a9fa0]"></i></div>
    <div class="relative w-[66px] h-[66px] flex items-center justify-center"><svg width="28" height="36" viewBox="0 0 28 36"><path d="M0 3.500A1.500 1.500 0 0 1 1.500 2h25A1.500 1.500 0 0 1 28 3.500V30H0z" fill="#62cdea"/><path d="M0 30h28v3H0z" fill="#f1eef0"/><path d="M0 33h28v1.500a1.500 1.500 0 0 1-1.500 1.500h-25A1.500 1.500 0 0 1 0 34.500z" fill="#b8560f"/><path d="M4.500 0v4.500M11 0v4.500M17.500 0v4.500M24 0v4.500" stroke="#12607c" stroke-width="2.600" stroke-linecap="round"/><path d="M5 11h18M5 17h18M5 23h18" stroke="#0a7294" stroke-width="2"/></svg><i class="absolute bottom-[3px] w-[9px] h-[5px] rounded-full bg-[#9a9fa0]"></i></div>
    <div class="relative w-[66px] h-[66px] flex items-center justify-center"><svg width="36" height="36" viewBox="0 0 36 36"><defs><linearGradient id="mp" x1="0" y1="0" x2="1" y2="1"><stop offset="0" stop-color="#ff9a3d"/><stop offset=".5" stop-color="#e0708f"/><stop offset="1" stop-color="#8a5ad0"/></linearGradient></defs><circle cx="18" cy="18" r="16.500" fill="#343437" stroke="url(#mp)" stroke-width="3"/><path d="M14 10.500 25 18l-11 7.500z" fill="#f5f5f5" stroke="#f5f5f5" stroke-width="2" stroke-linejoin="round"/></svg><i class="absolute bottom-[3px] w-[9px] h-[5px] rounded-full bg-[#9a9fa0]"></i></div>
    <div class="relative w-[66px] h-[66px] flex items-center justify-center"><div class="w-[60px] h-[60px] rounded-md bg-white/8 border border-white/8 flex items-center justify-center"><svg width="36" height="36"><use href="#chrome"/></svg></div><b class="absolute left-[35px] top-[7px] w-6 h-6 rounded-full bg-[#f4511e] text-[#ffd9cc] font-['Roboto'] font-normal text-[15px] flex items-center justify-center">S</b><i class="absolute bottom-[3px] w-6 h-[5px] rounded-full bg-[#4cc2ff]"></i></div>
    <div class="relative w-[66px] h-[66px] flex items-center justify-center"><svg width="36" height="36"><use href="#chrome"/></svg><b class="absolute left-[35px] top-[7px] w-6 h-6 rounded-full bg-[#0097a7] text-[#b5e3e8] font-['Roboto'] font-normal text-[14px] flex items-center justify-center">M</b><i class="absolute bottom-[3px] w-[9px] h-[5px] rounded-full bg-[#9a9fa0]"></i></div>
    <div class="relative w-[66px] h-[66px] flex items-center justify-center"><svg width="35" height="32" viewBox="0 0 35 32"><circle cx="19" cy="16" r="16" fill="#ed6c47"/><path d="M19 0a16 16 0 0 1 16 16H19z" fill="#ff8f6b"/><path d="M3 16h32a16 16 0 0 1-32 0z" fill="#d35230"/><rect y="7" width="18" height="18" rx="1.500" fill="#c43e1c"/><text x="9" y="20.800" text-anchor="middle" font-size="14" font-weight="700" fill="#fff">P</text></svg><i class="absolute bottom-[3px] w-[9px] h-[5px] rounded-full bg-[#9a9fa0]"></i></div>
  </div>
  <svg class="ml-[103px]" width="16" height="10" viewBox="0 0 16 10" fill="none" stroke="#fff" stroke-width="2" stroke-linecap="round"><path d="M1 9l7-7.500L15 9"/></svg>
  <svg class="ml-[28px] mt-1" width="25" height="22" viewBox="0 0 25 22"><path d="M5 18a5 5 0 0 1-1-9.500A7.500 7.500 0 0 1 18.500 7 5 5 0 0 1 19 17z" fill="#8f9294"/><path d="M5 18a4.500 4.500 0 0 1 0-9c3 0 4 1 6 3v6z" fill="#e5e7e8"/><circle cx="17.500" cy="15" r="6.800" fill="#d8232a"/><path d="M15 12.500l5 5M20 12.500l-5 5" stroke="#fff" stroke-width="1.800"/></svg>
  <svg class="ml-[23px]" width="22" height="24" viewBox="0 0 22 24" fill="none" stroke="#8fe0f8" stroke-width="1.800" stroke-linejoin="round"><path d="M20.500 1 1 13l11.500 1.500L16.500 23z"/></svg>
  <div class="ml-[28px] w-[38px] text-[17px] leading-[23px] text-center">ENG<br>IN</div>
  <svg class="ml-[26px]" width="25" height="19" viewBox="0 0 25 19" fill="none" stroke="#fff" stroke-width="1.900" stroke-linecap="round"><path d="M1.500 6.500a15.500 15.500 0 0 1 22 0M5 10.300a10.500 10.500 0 0 1 15 0M8.500 13.700a5.800 5.800 0 0 1 8 0"/><circle cx="12.500" cy="16.800" r="1.300" fill="#fff"/></svg>
  <svg class="ml-[10px]" width="25" height="20" viewBox="0 0 25 20" fill="none" stroke="#fff" stroke-width="1.700" stroke-linecap="round" stroke-linejoin="round"><path d="M1 7v6h3.500L10 18V2L4.500 7zM13.500 7a4.500 4.500 0 0 1 0 6M16.500 4a8.500 8.500 0 0 1 0 12"/><path opacity=".35" d="M19.500 1.500a12 12 0 0 1 0 17"/></svg>
  <svg class="ml-[12px]" width="25" height="17" viewBox="0 0 25 17" fill="none" stroke="#fff" stroke-width="1.800"><rect x="1" y="1" width="19.500" height="15" rx="3.500"/><rect x="4" y="4" width="9" height="9" rx="1" fill="#fff" stroke="none"/><path d="M21 6h2.500v5H21"/></svg>
  <div class="ml-[15px] w-[103px] text-[17px] leading-[24px] text-right whitespace-nowrap">22:31<br><span class="tracking-[0.35px]">25-04-2025</span></div>
</div>
</body>
</html>
